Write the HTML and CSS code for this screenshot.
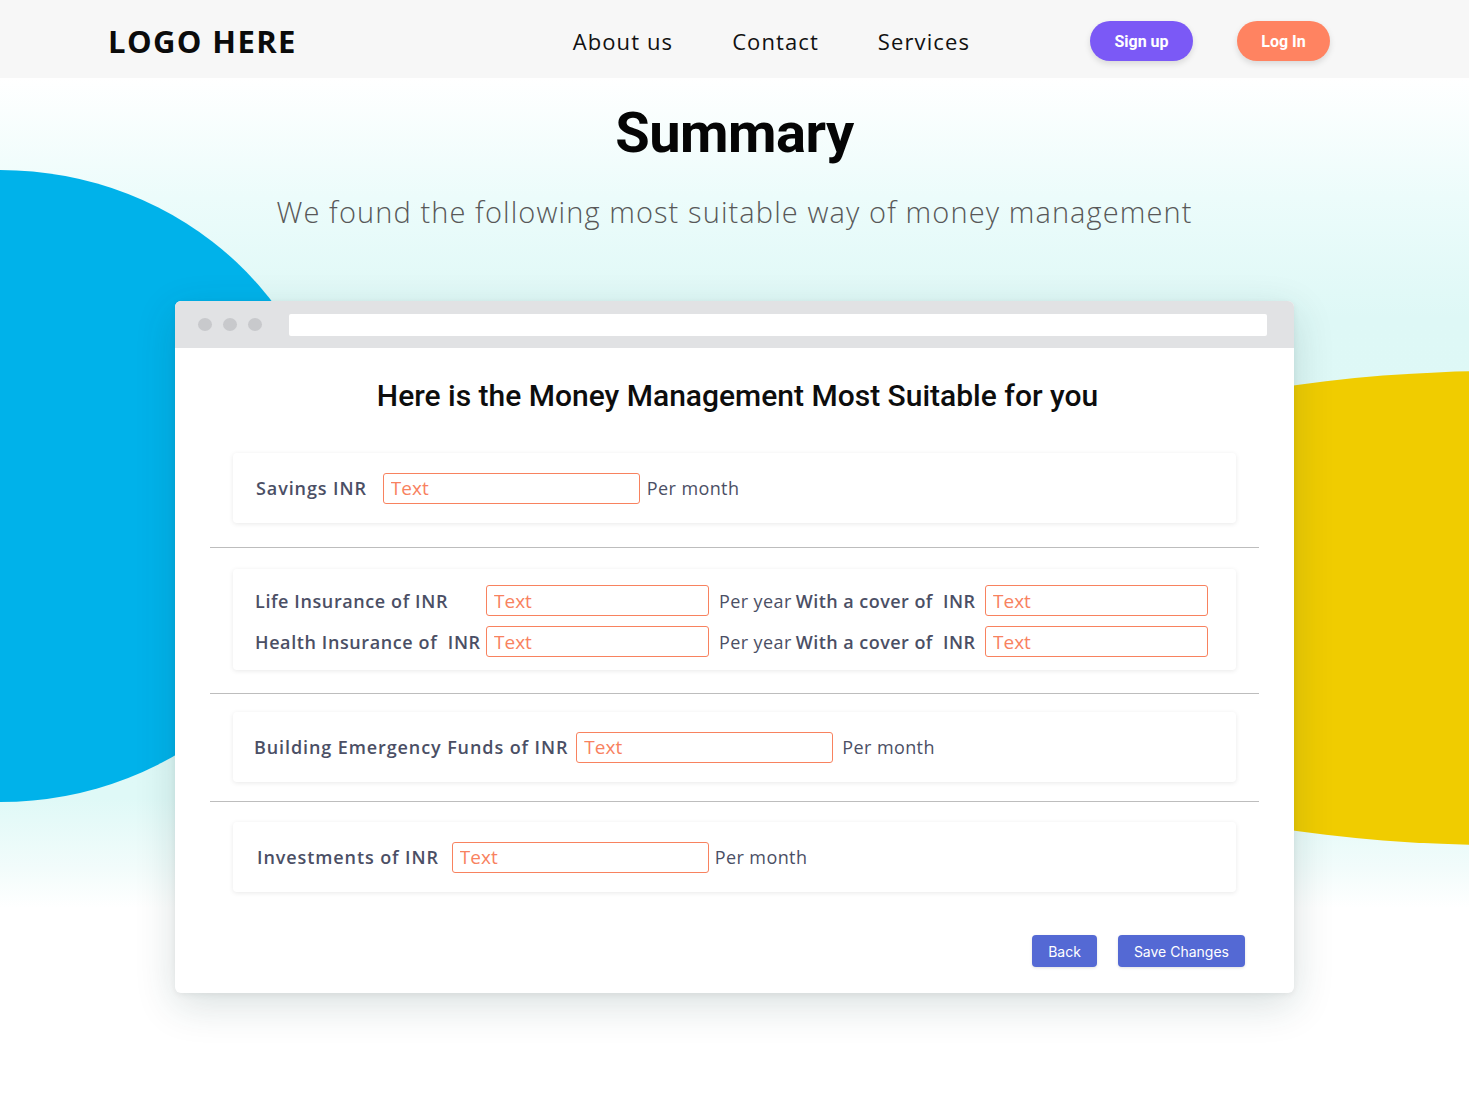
FILE: index.html
```html
<!DOCTYPE html>
<html lang="en">
<head>
<meta charset="utf-8">
<title>Summary</title>
<link rel="stylesheet" href="styles.css">
</head>
<body>
<header class="topbar">
  <div class="logo">LOGO HERE</div>
  <nav class="nav">
    <a class="nav-link" href="#">About us</a>
    <a class="nav-link" href="#">Contact</a>
    <a class="nav-link" href="#">Services</a>
  </nav>
  <div class="auth">
    <button class="pill pill-signup">Sign up</button>
    <button class="pill pill-login">Log In</button>
  </div>
</header>

<main class="hero">
  <div class="blob blob-blue"></div>
  <div class="blob blob-yellow"></div>

  <h1 class="title">Summary</h1>
  <p class="subtitle">We found the following most suitable way of money management</p>

  <section class="window">
    <div class="window-bar">
      <div class="dots">
        <span class="dot"></span><span class="dot"></span><span class="dot"></span>
      </div>
      <div class="url"></div>
    </div>
    <div class="window-body">
      <h2 class="card-title">Here is the Money Management Most Suitable for you</h2>

      <div class="box box-single box-savings">
        <span class="label">Savings INR</span>
        <input class="field field-wide" placeholder="Text">
        <span class="unit">Per month</span>
      </div>
      <hr class="sep">

      <div class="box box-grid">
        <span class="label label-grid">Life Insurance of INR</span>
        <input class="field" placeholder="Text">
        <span class="mid"><span class="unit">Per year</span> <span class="label label-mid">With a cover of&nbsp; INR</span></span>
        <input class="field" placeholder="Text">
        <span class="label label-grid">Health Insurance of&nbsp; INR</span>
        <input class="field" placeholder="Text">
        <span class="mid"><span class="unit">Per year</span> <span class="label label-mid">With a cover of&nbsp; INR</span></span>
        <input class="field" placeholder="Text">
      </div>
      <hr class="sep sep-b">

      <div class="box box-single box-emergency">
        <span class="label">Building Emergency Funds of INR</span>
        <input class="field field-wide" placeholder="Text">
        <span class="unit">Per month</span>
      </div>
      <hr class="sep sep-c">

      <div class="box box-single box-invest">
        <span class="label">Investments of INR</span>
        <input class="field field-wide" placeholder="Text">
        <span class="unit">Per month</span>
      </div>

      <div class="actions">
        <button class="btn">Back</button>
        <button class="btn">Save Changes</button>
      </div>
    </div>
  </section>
</main>
</body>
</html>
```

FILE: styles.css
```css
* { box-sizing: border-box; }

html, body {
  margin: 0;
  padding: 0;
  background: #ffffff;
}

body {
  font-family: "Open Sans", "Liberation Sans", sans-serif;
  width: 1469px;
  height: 1095px;
  overflow: hidden;
}

/* ---------- header ---------- */
.topbar {
  height: 78px;
  background: #f7f7f7;
  display: flex;
  align-items: center;
  padding: 0 139px 0 108px;
  position: relative;
  z-index: 2;
}

.logo {
  font-family: "Open Sans", sans-serif;
  font-weight: 700;
  font-size: 31px;
  letter-spacing: 1.4px;
  color: #0b0b0b;
  padding-top: 4px;
}

.nav {
  margin-left: auto;
  display: flex;
  gap: 59px;
  padding-top: 4px;
}

.nav-link {
  font-family: "Open Sans", sans-serif;
  font-size: 22px;
  font-weight: 400;
  color: #111;
  text-decoration: none;
  letter-spacing: 1.1px;
}

.auth {
  margin-left: 120px;
  display: flex;
  gap: 44px;
  padding-top: 4px;
}

.pill {
  border: none;
  height: 40px;
  border-radius: 20px;
  color: #fff;
  font-family: Roboto, sans-serif;
  font-weight: 700;
  font-size: 16px;
  box-shadow: 0 3px 6px rgba(0, 0, 0, 0.12);
}

.pill-signup { width: 103px; background: #7b59f6; }
.pill-login { width: 93px; background: #ff8361; }

/* ---------- hero ---------- */
.hero {
  position: relative;
  height: 1017px;
  overflow: hidden;
  background: linear-gradient(180deg, #ffffff 0px, #ecfcfb 120px, #def8f6 240px, #dff9f7 720px, #f2fcfb 790px, #ffffff 830px);
  display: flex;
  flex-direction: column;
  align-items: center;
}

.blob {
  position: absolute;
  border-radius: 50%;
  z-index: 0;
}

.blob-blue {
  width: 670px;
  height: 632px;
  left: -335px;
  top: 92px;
  background: #00b2ea;
}

.blob-yellow {
  width: 1200px;
  height: 474px;
  left: 900px;
  top: 293px;
  background: #f0cc00;
}

.title {
  position: relative;
  z-index: 1;
  margin: 23px 0 0;
  font-family: Roboto, sans-serif;
  font-weight: 700;
  font-size: 56px;
  line-height: 64px;
  color: #050505;
  letter-spacing: -0.5px;
}

.subtitle {
  position: relative;
  z-index: 1;
  margin: 30px 0 0;
  font-family: "Open Sans", sans-serif;
  font-weight: 300;
  font-size: 29px;
  line-height: 34px;
  letter-spacing: 1.1px;
  color: #585858;
}

/* ---------- browser window card ---------- */
.window {
  position: relative;
  z-index: 1;
  margin-top: 72px;
  width: 1119px;
  background: #fff;
  border-radius: 6px;
  box-shadow: 0 12px 40px rgba(20, 60, 60, 0.16), 0 2px 6px rgba(0, 0, 0, 0.06);
  overflow: hidden;
}

.window-bar {
  height: 47px;
  background: #e1e2e4;
  display: flex;
  align-items: center;
  padding: 0 27px 0 23px;
}

.dots {
  display: flex;
  gap: 11px;
}

.dot {
  width: 14px;
  height: 13px;
  border-radius: 50%;
  background: #c8c9cc;
}

.url {
  margin-left: 27px;
  flex: 1;
  height: 22px;
  background: #fff;
  border-radius: 2px;
}

.window-body {
  padding: 30px 35px 26px;
  display: flex;
  flex-direction: column;
  align-items: center;
}

.card-title {
  margin: 0 0 0 6px;
  font-family: Roboto, sans-serif;
  font-weight: 500;
  font-size: 30px;
  line-height: 36px;
  color: #0d0d0d;
  letter-spacing: 0;
}

.box {
  width: 1003px;
  align-self: flex-start;
  margin-left: 23px;
  background: #fff;
  border-radius: 4px;
  box-shadow: 0 1px 5px rgba(0, 0, 0, 0.09);
}

.box-single {
  height: 70px;
  display: flex;
  align-items: center;
  padding-left: 23px;
}

.box-savings { margin-top: 39px; }
.box-emergency { margin-top: 18px; padding-left: 21px; }
.box-invest { margin-top: 20px; padding-left: 24px; }

.label {
  font-family: "Open Sans", sans-serif;
  font-weight: 600;
  font-size: 18px;
  color: #4b4f65;
  letter-spacing: 0.9px;
  white-space: nowrap;
}

.label-grid { letter-spacing: 0.6px; }
.label-mid { letter-spacing: 0.45px; }

.unit {
  font-family: "Open Sans", sans-serif;
  font-weight: 400;
  font-size: 18px;
  color: #4b4f65;
  letter-spacing: 0.4px;
  white-space: nowrap;
}

.field {
  height: 31px;
  border: 1px solid #f8825f;
  border-radius: 3px;
  padding: 0 7px;
  font-family: "Open Sans", sans-serif;
  font-size: 19px;
  color: #f8825f;
  background: #fff;
  outline: none;
  width: 223px;
}

.field::placeholder { color: #f8825f; opacity: 1; }

.field-wide { width: 257px; margin: 0 7px 0 16px; }
.box-emergency .field-wide { margin-left: 8px; margin-right: 9px; }
.box-invest .field-wide { margin-left: 13px; margin-right: 6px; }

.sep {
  width: 1049px;
  margin: 24px 0 0;
  border: none;
  border-top: 1px solid #bdbdbd;
  height: 0;
}

.sep-b { margin-top: 23px; }
.sep-c { margin-top: 19px; }

.box-grid {
  margin-top: 21px;
  display: grid;
  grid-template-columns: 231px 224px 1fr 224px;
  grid-auto-rows: 31px;
  row-gap: 10px;
  align-items: center;
  padding: 16px 27px 13px 22px;
}

.mid {
  padding: 0 9px;
  white-space: nowrap;
}

/* ---------- actions ---------- */
.actions {
  align-self: flex-end;
  margin-top: 43px;
  margin-right: 14px;
  display: flex;
  gap: 21px;
}

.btn {
  height: 32px;
  border: none;
  border-radius: 4px;
  background: #5469d4;
  color: #fff;
  font-family: Inter, sans-serif;
  font-size: 14px;
  padding: 0 16px;
  box-shadow: 0 1px 3px rgba(0, 0, 0, 0.12);
}
```
